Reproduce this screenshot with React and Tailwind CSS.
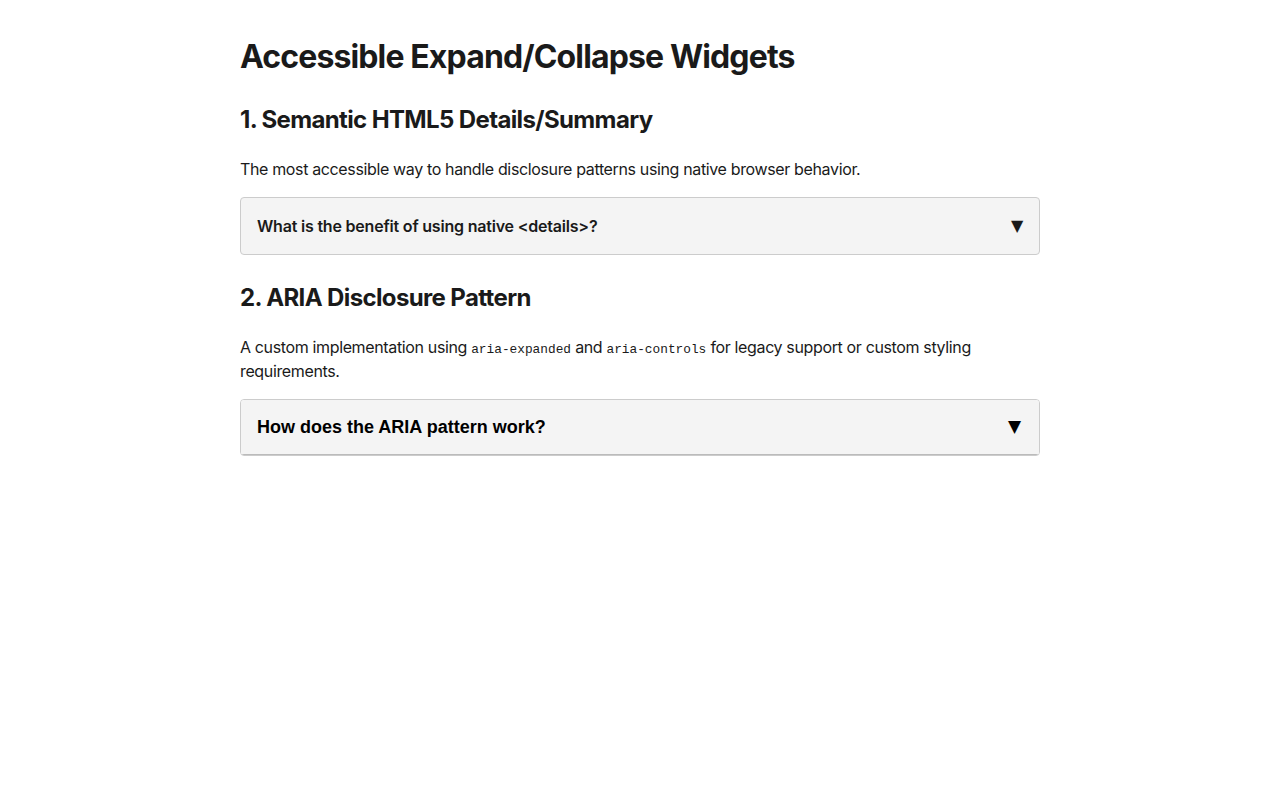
export default function App() {
  return (
    <div className="min-h-screen bg-white text-[#1a1a1a]" style={{ fontFamily: 'Inter, "Noto Sans", sans-serif' }}>
      <div className="mx-auto w-[800px] pt-[38px]">
        <h1 className="m-0 text-[32px] font-bold leading-[1.2] tracking-[-0.87px]">Accessible Expand/Collapse Widgets</h1>

        <h2 className="mt-[30px] text-[24px] font-bold leading-[1.2] tracking-[-0.63px]">1. Semantic HTML5 Details/Summary</h2>
        <p className="mt-[22px] text-[16px] leading-[24px] tracking-[-0.36px]">
          The most accessible way to handle disclosure patterns using native browser behavior.
        </p>
        <div className="mt-[16px] rounded-[4px] border border-[#cccccc] bg-[#f4f4f4]">
          <div className="flex items-center justify-between px-[16px] py-[16px] text-[16px] font-semibold leading-[24px] tracking-[-0.2px]">
            <span>What is the benefit of using native &lt;details&gt;?</span>
            <span className="text-[16px] leading-none" style={{ fontFamily: '"DejaVu Sans", sans-serif' }}>▼</span>
          </div>
        </div>

        <h2 className="mt-[29px] text-[24px] font-bold leading-[1.2] tracking-[-0.63px]">2. ARIA Disclosure Pattern</h2>
        <p className="mt-[22px] text-[16px] leading-[24px] tracking-[-0.36px]">
          A custom implementation using{" "}
          <code className="text-[12.8px] leading-none tracking-normal" style={{ fontFamily: '"Liberation Mono", monospace' }}>aria-expanded</code> and{" "}
          <code className="text-[12.8px] leading-none tracking-normal" style={{ fontFamily: '"Liberation Mono", monospace' }}>aria-controls</code> for legacy support or custom styling requirements.
        </p>
        <div className="mt-[16px] overflow-hidden rounded-[4px] border border-[#cccccc] bg-[#f4f4f4]">
          <button
            type="button"
            className="flex w-full items-center justify-between border-b border-[#bbbbbb] bg-[#f4f4f4] py-[15px] pl-[16px] pr-[18px] text-left text-[18px] font-bold leading-[24px] text-black"
            style={{ fontFamily: '"Liberation Sans", Arial, sans-serif' }}
          >
            <span>How does the ARIA pattern work?</span>
            <span className="text-[17px] leading-none" style={{ fontFamily: '"DejaVu Sans", sans-serif' }}>▼</span>
          </button>
        </div>
      </div>
    </div>
  );
}
